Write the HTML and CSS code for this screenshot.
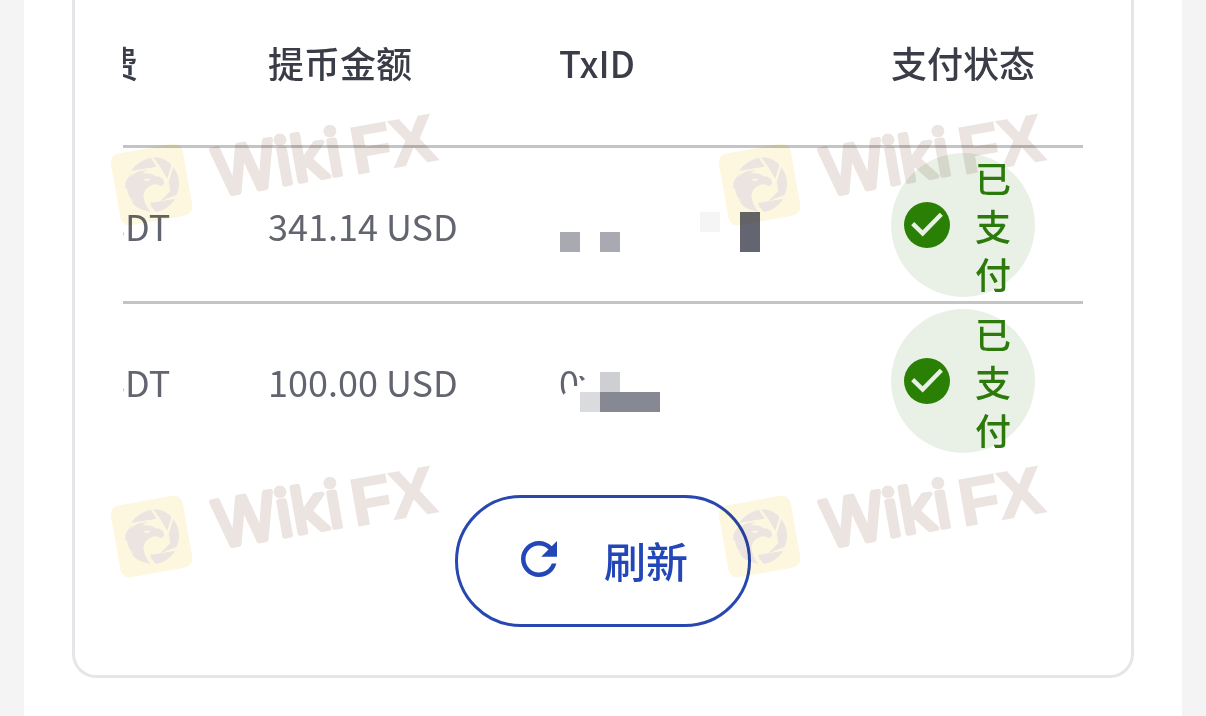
FILE: index.html
```
<!DOCTYPE html>
<html lang="zh-CN">
<head>
  <meta charset="UTF-8" />
  <meta name="viewport" content="width=device-width, initial-scale=1" />
  <title>提币记录</title>
  <link rel="stylesheet" href="styles.css">
</head>
<body>
  <!-- shared shapes -->
  <svg class="defs" width="0" height="0" aria-hidden="true">
    <symbol id="check" viewBox="0 0 138 138">
      <circle cx="69" cy="69" r="69" fill="#2a7f05"/>
      <path d="M26 65L56 94L112 37" fill="none" stroke="#e8f1e6" stroke-width="13"/>
    </symbol>
    <symbol id="wikifx" viewBox="0 0 340 130">
      <rect x="9" y="48" width="73" height="73" rx="9" fill="#fef7e0" transform="rotate(-10 46 84)"/>
      <g transform="translate(1 41) scale(0.3333)" fill="#ebe4e0">
        <path d="M72 90Q92 58 132 51L149 77Z"/>
        <path d="M139 49Q172 48 193 72L181 113L160 78Z"/>
        <path d="M199 78Q224 112 213 150Q211 157 207 163L160 181L190 150L185 122Z"/>
        <path d="M205 173Q182 209 146 212Q132 200 128 186Z"/>
        <path d="M54 138Q56 112 76 97L70 108Q90 86 122 88Q109 94 104 97Q134 94 145 106Q170 105 172 127Q168 136 160 134Q146 126 133 133Q110 143 109 164Q112 190 130 212Q88 208 71 177L80 182Q62 164 60 146L66 152Z"/>
        <path d="M108 114L131 113Q126 122 116 119Z" fill="#fef7e0"/>
      </g>
      <text class="wm-wiki" transform="translate(112 96) rotate(-10)">Wiki</text>
      <text class="wm-fx" transform="translate(249 74) rotate(-10)">FX</text>
    </symbol>
  </svg>

  <main class="sheet">
    <section class="card">
      <div class="table-scroll">
        <table>
          <colgroup>
            <col class="col-fee">
            <col class="col-amount">
            <col class="col-tx">
            <col class="col-status">
          </colgroup>
          <thead>
            <tr>
              <th>手续费</th>
              <th>提币金额</th>
              <th>TxID</th>
              <th>支付状态</th>
            </tr>
          </thead>
          <tbody>
            <tr>
              <td>10 USDT</td>
              <td>341.14 USD</td>
              <td>
                <svg class="mosaic" width="208" height="56" viewBox="0 0 208 56">
                  <path d="M1 35h20v20h-20zM41 35h20v20h-20z" fill="#a8a9b1"/>
                  <path d="M141 15h20v20h-20z" fill="#f5f5f6"/>
                  <path d="M181 15h20v40h-20z" fill="#636671"/>
                </svg>
              </td>
              <td>
                <div class="badge">
                  <svg class="badge-icon"><use href="#check"/></svg>
                  <span>已支付</span>
                </div>
              </td>
            </tr>
            <tr>
              <td>10 USDT</td>
              <td>100.00 USD</td>
              <td>
                <div class="tx">0x
                  <svg class="mosaic tx-mask" width="208" height="56" viewBox="0 0 208 56">
                    <path d="M5 56V37L14 29H19V0H50V56Z" fill="#fff"/>
                    <path d="M20 19H23L26 22L23 24Z" fill="#636671"/>
                    <path d="M41 15h20v20h-20z" fill="#cecfd3"/>
                    <path d="M21 35h20v20h-20z" fill="#dadbdf"/>
                    <path d="M41 35h60v20h-60z" fill="#868993"/>
                  </svg>
                </div>
              </td>
              <td>
                <div class="badge">
                  <svg class="badge-icon"><use href="#check"/></svg>
                  <span>已支付</span>
                </div>
              </td>
            </tr>
          </tbody>
        </table>
      </div>

      <button class="refresh" type="button">
        <svg width="54" height="54" viewBox="0 0 24 24" fill="currentColor" aria-hidden="true">
          <path d="M17.65 6.35C16.2 4.9 14.21 4 12 4c-4.42 0-7.99 3.58-7.99 8s3.57 8 7.99 8c3.73 0 6.84-2.55 7.73-6h-2.08c-.82 2.33-3.04 4-5.65 4-3.31 0-6-2.69-6-6s2.69-6 6-6c1.66 0 3.14.69 4.22 1.78L13 11h7V4l-2.35 2.35z"/>
        </svg>
        刷新
      </button>
    </section>
  </main>

  <!-- watermark layer -->
  <div class="watermarks" aria-hidden="true">
    <svg><use href="#wikifx"/></svg>
    <svg><use href="#wikifx"/></svg>
    <svg><use href="#wikifx"/></svg>
    <svg><use href="#wikifx"/></svg>
  </div>
</body>
</html>
```
FILE: styles.css
```
* {
  box-sizing: border-box;
}

body {
  margin: 0;
  position: relative;
  min-height: 100vh;
  background-color: #f4f4f4;
  font-family: "Noto Sans CJK SC", sans-serif;
  color: #62656f;
}

.defs {
  position: absolute;
}

.sheet {
  min-height: 100vh;
  margin: 0 24px;
  padding: 0 48px 38px;
  background-color: #fff;
}

.card {
  padding: 0 48px 48px;
  border: 3px solid #e6e6ea;
  border-top: none;
  border-radius: 0 0 24px 24px;
}

/* the table is wider than the card and sits scrolled to its right end */
.table-scroll {
  display: flex;
  justify-content: flex-end;
  overflow: hidden;
}

table {
  flex: none;
  width: 1104px;
  table-layout: fixed;
  border-collapse: separate;
  border-spacing: 0;
  font-size: 36px;
  line-height: 48px;
}

.col-fee {
  width: 241px;
}

.col-amount {
  width: 291px;
}

.col-tx {
  width: 332px;
}

.col-status {
  width: 240px;
}

th,
td {
  padding: 5px 0 4px 48px;
  text-align: left;
  white-space: nowrap;
  border-bottom: 3px solid #c4c4c4;
}

th {
  padding-top: 38px;
  padding-bottom: 59px;
  font-weight: 500;
  color: #3a3c47;
}

th:first-child,
td:first-child {
  padding-left: 51px;
}

tbody tr:last-child td {
  border-bottom: none;
}

.tx {
  position: relative;
}

.mosaic {
  display: block;
}

.tx-mask {
  position: absolute;
  left: 0;
  top: 0;
}

.badge {
  display: flex;
  align-items: center;
  gap: 25px;
  width: 144px;
  height: 144px;
  padding-left: 13px;
  border-radius: 50%;
  background-color: #e9f1e7;
  color: #2c7a0b;
  font-weight: 500;
}

.badge span {
  width: 36px;
  white-space: normal;
}

.badge-icon {
  flex: none;
  width: 46px;
  height: 46px;
}

.refresh {
  display: flex;
  align-items: center;
  gap: 38px;
  height: 132px;
  margin: 38px auto 0;
  padding: 0 60px 4px 54px;
  border: 3px solid #2848b0;
  border-radius: 66px;
  background-color: transparent;
  color: #2447b8;
  font-family: inherit;
  font-size: 42px;
  font-weight: 500;
  cursor: pointer;
}

.watermarks {
  position: absolute;
  left: 106px;
  top: 100px;
  display: grid;
  grid-template-columns: 340px 340px;
  gap: 222px 268px;
  mix-blend-mode: multiply;
  pointer-events: none;
}

.watermarks svg {
  width: 340px;
  height: 130px;
}

.wm-wiki,
.wm-fx {
  fill: #ebe4e0;
  stroke: #ebe4e0;
}

.wm-wiki {
  stroke-width: 5px;
  stroke-linejoin: round;
  font-family: Inter, sans-serif;
  font-size: 64px;
}

.wm-fx {
  stroke-width: 2px;
  font-family: "Liberation Sans", sans-serif;
  font-size: 66px;
  font-weight: 700;
}
```
